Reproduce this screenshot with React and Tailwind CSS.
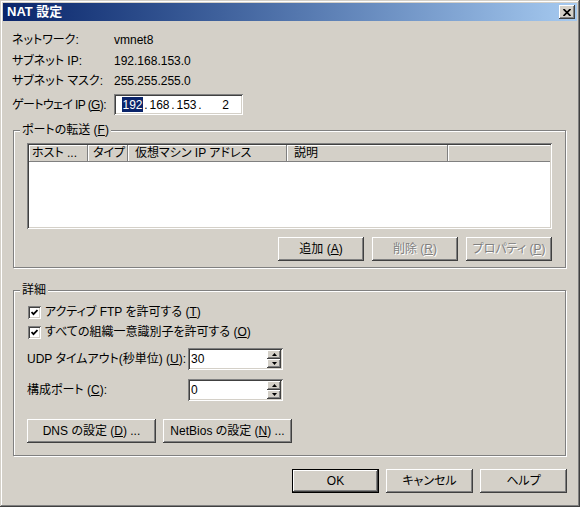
import React from "react";

// classic 3D edges
const raised =
  "shadow-[inset_-1px_-1px_0_#404040,inset_1px_1px_0_#fff,inset_-2px_-2px_0_#808080]";
const sunken =
  "shadow-[inset_1px_1px_0_#808080,inset_-1px_-1px_0_#fff,inset_2px_2px_0_#404040,inset_-2px_-2px_0_#d4d0c8]";

const Btn = ({ children, className, disabled, isDefault }) => (
  <button
    className={`flex items-center justify-center bg-[#d4d0c8] ${raised} ${
      isDefault ? "border border-black" : ""
    } ${
      disabled ? "text-[#808080] [text-shadow:1px_1px_0_#fff]" : "text-black"
    } ${className}`}
  >
    {children}
  </button>
);

const Check = () => (
  <div className={`w-[13px] h-[13px] bg-white ${sunken} flex items-center justify-center`}>
    <svg width="7" height="7" viewBox="0 0 7 7">
      <path d="M0.5 3 L2.5 5.2 L6.5 1" stroke="#000" strokeWidth="1.8" fill="none" />
    </svg>
  </div>
);

const Arrow = ({ up }) => (
  <div className={`w-[14px] h-[9px] bg-[#d4d0c8] ${raised} flex items-center justify-center`}>
    <svg width="5" height="3" viewBox="0 0 5 3">
      <path d={up ? "M2.5 0 L5 3 L0 3 Z" : "M0 0 L5 0 L2.5 3 Z"} fill="#000" />
    </svg>
  </div>
);

const Spinner = ({ value }) => (
  <div className={`w-[95px] h-[22px] bg-white ${sunken} flex items-center p-[2px]`}>
    <span className="flex-1 pl-[1px]">{value}</span>
    <div className="flex flex-col">
      <Arrow up />
      <Arrow />
    </div>
  </div>
);

const Group = ({ label, children, className }) => (
  <fieldset
    className={`ml-[1px] w-[553px] border border-[#808080] shadow-[inset_1px_1px_0_#fff,1px_1px_0_#fff] ${className}`}
  >
    <legend className="ml-[6px] px-[2px] bg-[#d4d0c8] leading-[14px]">{label}</legend>
    {children}
  </fieldset>
);

const HeadCell = ({ children, className }) => (
  <div
    className={`h-full flex items-center border-r border-[#808080] shadow-[inset_1px_1px_0_#fff] ${className}`}
  >
    {children}
  </div>
);

export default function App() {
  return (
    <div className="w-[580px] h-[507px] bg-[#d4d0c8] p-[3px] flex flex-col whitespace-nowrap text-black text-[12px] leading-[14px] font-['Liberation_Sans','Noto_Sans_CJK_JP',sans-serif] [font-feature-settings:'palt'] shadow-[inset_-1px_-1px_0_#404040,inset_1px_1px_0_#d4d0c8,inset_-2px_-2px_0_#808080,inset_2px_2px_0_#fff]">
      {/* title bar */}
      <div className="h-[18px] flex items-center justify-between pl-[4px] pr-[2px] bg-gradient-to-r from-[#0a246a] to-[#a6caf0]">
        <span className="text-white font-bold text-[13px]">NAT 設定</span>
        <div className={`w-[16px] h-[14px] bg-[#d4d0c8] ${raised} flex items-center justify-center`}>
          <svg width="8" height="7" viewBox="0 0 8 7">
            <path d="M0.5 0 L7.5 7 M7.5 0 L0.5 7" stroke="#000" strokeWidth="1.7" />
          </svg>
        </div>
      </div>

      <div className="flex flex-col pl-[9px] pr-[10px]">
        {/* info */}
        <div className="mt-[9px] flex flex-col">
          <div className="h-[20px] flex items-center">
            <span className="w-[102px] shrink-0">ネットワーク:</span>
            <span>vmnet8</span>
          </div>
          <div className="h-[21px] flex items-center">
            <span className="w-[102px] shrink-0">サブネット IP:</span>
            <span>192.168.153.0</span>
          </div>
          <div className="h-[20px] flex items-center">
            <span className="w-[102px] shrink-0">サブネット マスク:</span>
            <span>255.255.255.0</span>
          </div>
          <div className="mt-[3px] h-[21px] flex items-center">
            <span className="w-[102px] shrink-0 overflow-visible tracking-[-0.6px]">
              ゲートウェイ IP (<u>G</u>):
            </span>
            <div className={`w-[129px] h-[21px] bg-white ${sunken} flex items-center pl-[8px]`}>
              <span className="w-[21px] h-[15px] bg-[#0a246a] text-white flex items-center justify-center">192</span>
              <span className="w-[6px] text-center">.</span>
              <span className="w-[21px] text-center">168</span>
              <span className="w-[6px] text-center">.</span>
              <span className="w-[21px] text-center">153</span>
              <span className="w-[6px] text-center">.</span>
              <span className="w-[26px] text-right">2</span>
            </div>
          </div>
        </div>

        {/* port forwarding */}
        <Group label={<>ポートの転送 (<u>F</u>)</>} className="mt-[8px]">
          <div className="px-[13px] pt-[6px] pb-[6px] flex flex-col">
            <div className={`h-[86px] bg-white ${sunken} p-[2px] flex flex-col`}>
              <div className="h-[17px] flex bg-[#d4d0c8] border-b border-[#808080]">
                <HeadCell className="w-[59px] pl-[3px]">ホスト ...</HeadCell>
                <HeadCell className="w-[40px] pl-[5px]">タイプ</HeadCell>
                <HeadCell className="w-[159px] pl-[7px]">仮想マシン IP アドレス</HeadCell>
                <HeadCell className="w-[161px] pl-[7px]">説明</HeadCell>
                <div className="flex-1 h-full shadow-[inset_1px_1px_0_#fff]" />
              </div>
            </div>
            <div className="mt-[8px] flex justify-end gap-[8px]">
              <Btn className="w-[86px] h-[24px]">
                追加 (<u>A</u>)
              </Btn>
              <Btn className="w-[86px] h-[24px]" disabled>
                削除 (<u>R</u>)
              </Btn>
              <Btn className="w-[86px] h-[24px]" disabled>
                プロパティ (<u>P</u>)
              </Btn>
            </div>
          </div>
        </Group>

        {/* details */}
        <Group label="詳細" className="mt-[15px]">
          <div className="px-[13px] pt-[5px] pb-[12px] flex flex-col">
            <div className="h-[20px] flex items-center gap-[4px] ml-[1px]">
              <Check />
              <span>
                アクティブ FTP を許可する (<u>T</u>)
              </span>
            </div>
            <div className="h-[20px] flex items-center gap-[4px] ml-[1px]">
              <Check />
              <span>
                すべての組織一意識別子を許可する (<u>O</u>)
              </span>
            </div>
            <div className="mt-[6px] flex items-center">
              <span className="w-[161px] shrink-0">
                UDP タイムアウト(秒単位) (<u>U</u>):
              </span>
              <Spinner value="30" />
            </div>
            <div className="mt-[9px] flex items-center">
              <span className="w-[161px] shrink-0">
                構成ポート (<u>C</u>):
              </span>
              <Spinner value="0" />
            </div>
            <div className="mt-[18px] flex gap-[7px]">
              <Btn className="w-[129px] h-[24px]">
                DNS の設定 (<u>D</u>) ...
              </Btn>
              <Btn className="w-[129px] h-[24px]">
                NetBios の設定 (<u>N</u>) ...
              </Btn>
            </div>
          </div>
        </Group>

        {/* dialog buttons */}
        <div className="mt-[13px] flex justify-end gap-[7px]">
          <Btn className="w-[87px] h-[24px]" isDefault>
            OK
          </Btn>
          <Btn className="w-[87px] h-[24px]">キャンセル</Btn>
          <Btn className="w-[87px] h-[24px]">ヘルプ</Btn>
        </div>
      </div>
    </div>
  );
}
